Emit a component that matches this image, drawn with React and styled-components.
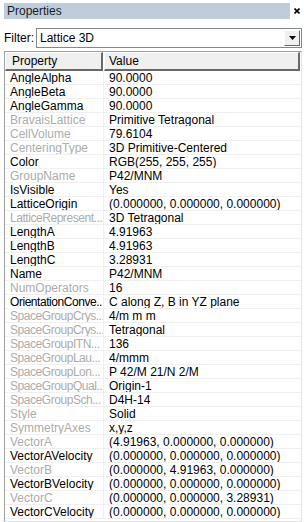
import React from 'react';
import styled, { createGlobalStyle } from 'styled-components';

const GlobalStyle = createGlobalStyle`
  html, body {
    margin: 0;
    padding: 0;
    background: #ffffff;
  }
  body {
    font-family: "Liberation Sans", Arial, sans-serif;
    font-size: 12px;
    color: #000;
  }
`;

const Panel = styled.div`
  width: 304px;
  height: 522px;
  overflow: hidden;
  display: flex;
  flex-direction: column;
  box-sizing: border-box;
  padding-top: 3px;
`;

const TitleRow = styled.div`
  display: flex;
  align-items: stretch;
  height: 16px;
`;

const TitleBar = styled.div`
  margin-left: 4px;
  width: 286px;
  background: #bfcddb;
  padding-left: 3px;
  box-sizing: border-box;
  line-height: 16px;
  color: #1b1b1b;
`;

const CloseButton = styled.div`
  flex: 1;
  display: flex;
  align-items: center;
  justify-content: center;
`;

const FilterRow = styled.div`
  display: flex;
  align-items: center;
  height: 20px;
  margin-top: 9px;
  padding-left: 4px;
`;

const FilterLabel = styled.span`
  width: 32px;
`;

const Combo = styled.div`
  width: 266px;
  height: 20px;
  box-sizing: border-box;
  border: 1px solid #828790;
  display: flex;
  align-items: center;
  background: #fff;
`;

const ComboText = styled.span`
  flex: 1;
  padding-left: 3px;
`;

const ComboArrow = styled.div`
  width: 16px;
  height: 16px;
  margin-right: 1px;
  box-sizing: border-box;
  background: #f0f0f0;
  border-top: 1px solid #fff;
  border-left: 1px solid #fff;
  border-right: 1px solid #696969;
  border-bottom: 1px solid #696969;
  display: flex;
  align-items: center;
  justify-content: center;
`;

const Grid = styled.div`
  margin: 3px 2px 0 4px;
  flex: 1;
  box-sizing: border-box;
  border-top: 1px solid #a0a0a0;
  border-left: 1px solid #a0a0a0;
  border-right: 1px solid #e3e3e3;
  border-bottom: 1px solid #e3e3e3;
  display: flex;
  flex-direction: column;
`;

const Header = styled.div`
  display: grid;
  grid-template-columns: 99px 1fr;
  height: 19px;
`;

const HeaderCell = styled.div`
  box-sizing: border-box;
  background: #f0f0f0;
  border-top: 1px solid #fff;
  border-left: 1px solid #fff;
  border-right: 2px solid #696969;
  border-bottom: 2px solid #696969;
  padding-left: ${p => p.$pad}px;
  line-height: 16px;
  margin-right: 1px;
`;

const Row = styled.div`
  display: grid;
  grid-template-columns: 99px 1fr;
  height: 14px;
  line-height: 14px;
  border-bottom: 1px solid #f0f0f0;
  box-sizing: border-box;
`;

const NameCell = styled.div`
  padding-left: 5px;
  border-right: 1px solid #f0f0f0;
  color: ${p => (p.$disabled ? '#acacac' : '#000')};
  letter-spacing: ${p => (p.$tight ? '-0.45px' : '0')};
  white-space: nowrap;
  overflow: hidden;
`;

const ValueCell = styled.div`
  padding-left: 5px;
  white-space: nowrap;
  overflow: hidden;
`;

const rows = [
  ['AngleAlpha', '90.0000'],
  ['AngleBeta', '90.0000'],
  ['AngleGamma', '90.0000'],
  ['BravaisLattice', 'Primitive Tetragonal', true],
  ['CellVolume', '79.6104', true],
  ['CenteringType', '3D Primitive-Centered', true],
  ['Color', 'RGB(255, 255, 255)'],
  ['GroupName', 'P42/MNM', true],
  ['IsVisible', 'Yes'],
  ['LatticeOrigin', '(0.000000, 0.000000, 0.000000)'],
  ['LatticeRepresent...', '3D Tetragonal', true],
  ['LengthA', '4.91963'],
  ['LengthB', '4.91963'],
  ['LengthC', '3.28931'],
  ['Name', 'P42/MNM'],
  ['NumOperators', '16', true],
  ['OrientationConve...', 'C along Z, B in YZ plane'],
  ['SpaceGroupCrys...', '4/m m m', true],
  ['SpaceGroupCrys...', 'Tetragonal', true],
  ['SpaceGroupITN...', '136', true],
  ['SpaceGroupLau...', '4/mmm', true],
  ['SpaceGroupLon...', 'P 42/M 21/N 2/M', true],
  ['SpaceGroupQual...', 'Origin-1', true],
  ['SpaceGroupSch...', 'D4H-14', true],
  ['Style', 'Solid', true],
  ['SymmetryAxes', 'x,y,z', true],
  ['VectorA', '(4.91963, 0.000000, 0.000000)', true],
  ['VectorAVelocity', '(0.000000, 0.000000, 0.000000)'],
  ['VectorB', '(0.000000, 4.91963, 0.000000)', true],
  ['VectorBVelocity', '(0.000000, 0.000000, 0.000000)'],
  ['VectorC', '(0.000000, 0.000000, 3.28931)', true],
  ['VectorCVelocity', '(0.000000, 0.000000, 0.000000)'],
];

function App() {
  return (
    <>
      <GlobalStyle />
      <Panel>
        <TitleRow>
          <TitleBar>Properties</TitleBar>
          <CloseButton>
            <svg width="6" height="6" viewBox="0 0 6 6">
              <path d="M0.5 0.5L5.5 5.5M5.5 0.5L0.5 5.5" stroke="#000" strokeWidth="1.6" />
            </svg>
          </CloseButton>
        </TitleRow>
        <FilterRow>
          <FilterLabel>Filter:</FilterLabel>
          <Combo>
            <ComboText>Lattice 3D</ComboText>
            <ComboArrow>
              <svg width="7" height="4" viewBox="0 0 7 4">
                <path d="M0 0H7L3.5 4Z" fill="#000" />
              </svg>
            </ComboArrow>
          </Combo>
        </FilterRow>
        <Grid>
          <Header>
            <HeaderCell $pad={6}>Property</HeaderCell>
            <HeaderCell $pad={4}>Value</HeaderCell>
          </Header>
          {rows.map(([name, value, disabled], i) => (
            <Row key={i}>
              <NameCell $disabled={disabled} $tight={name.endsWith('...')}>
                {name}
              </NameCell>
              <ValueCell>{value}</ValueCell>
            </Row>
          ))}
        </Grid>
      </Panel>
    </>
  );
}

export default App;
